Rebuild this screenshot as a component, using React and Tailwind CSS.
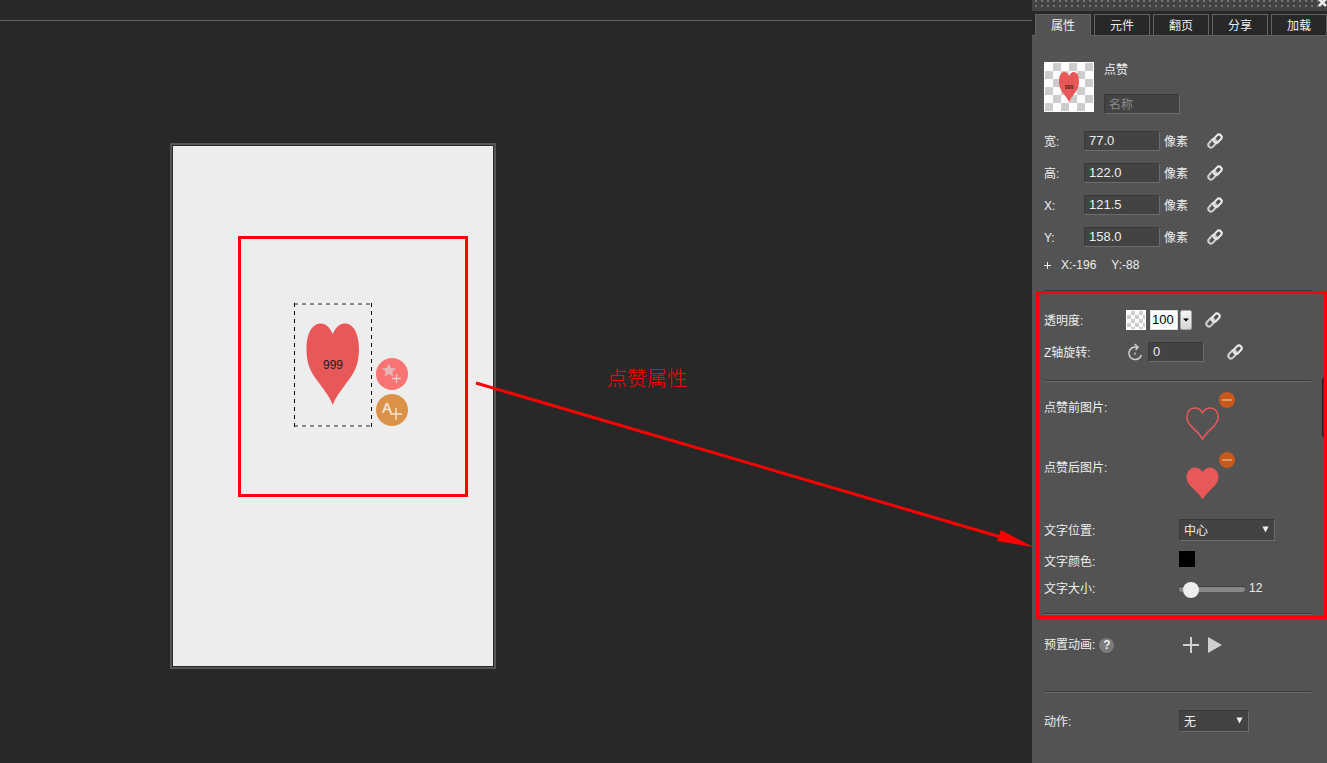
import React from "react";

const HEART =
  "M50 13 C44 4 36 0 27 0 C10 0 0 13 0 31 C0 55 14 64 25 74 C36 84 44 90 50 100 C56 90 64 84 75 74 C86 64 100 55 100 31 C100 13 90 0 73 0 C64 0 56 4 50 13Z";

const inset =
  "border border-t-[#393939] border-l-[#393939] border-r-[#6c6c6c] border-b-[#6c6c6c] bg-[#434343] text-[#eeeeee] outline-none";

function Chain({ label }) {
  return (
    <button type="button" aria-label={label} className="flex size-[14px] items-center justify-center">
      <svg viewBox="0 0 14 14" className="size-[14px] overflow-visible" fill="none" strokeWidth="2">
        <g transform="rotate(-47 7 7)">
          <rect x="-1.2" y="4" width="9.4" height="5.4" rx="2.7" stroke="#cfcfcf" />
          <rect x="5.8" y="4.6" width="9.4" height="5.4" rx="2.7" stroke="#ececec" />
        </g>
      </svg>
    </button>
  );
}

function Divider() {
  return <hr className="mr-4 h-[2px] border-0 border-t border-b border-t-[#3a3a3a] border-b-[#6b6b6b]" />;
}

function DimensionRow({ id, label, value }) {
  return (
    <div className="flex h-8 items-center">
      <label htmlFor={id} className="w-10 pt-[2px]">{label}</label>
      <input id={id} defaultValue={value} className={`h-5 w-[76px] px-1 pb-px text-[13px] ${inset}`} />
      <span className="ml-1 w-11 pt-[2px]">像素</span>
      <Chain label={`${label}关联`} />
    </div>
  );
}

function Dropdown({ id, options, className }) {
  return (
    <div className={`relative ${className}`}>
      <select id={id} className={`h-[22px] w-full appearance-none px-1 pt-[2px] text-[12px] ${inset}`}>
        {options.map((o) => (
          <option key={o}>{o}</option>
        ))}
      </select>
      <svg viewBox="0 0 8 8" className="pointer-events-none absolute top-[7px] right-[6px] size-[7px]" fill="#eeeeee">
        <path d="M0.5 0.5h7L4 7.5z" />
      </svg>
    </div>
  );
}

function HeartRow({ label, filled }) {
  return (
    <div className="flex h-[60px] items-start">
      <span className="w-[142px] pt-[18px] leading-4">{label}</span>
      <div className="relative pt-[25px]">
        <svg viewBox="-3 -3 106 106" preserveAspectRatio="none" className="h-[33px] w-[33px]">
          <path
            d="M50 15 C44 5 36 0 26 0 C10 0 0 13 0 29 C0 43 7 52 16 61 L36 81 C42 87 46 93 50 100 C54 93 58 87 64 81 L84 61 C93 52 100 43 100 29 C100 13 90 0 74 0 C64 0 56 5 50 15Z"
            fill={filled ? "#e95858" : "none"}
            stroke="#e95858"
            strokeWidth={filled ? 3 : 5}
          />
        </svg>
        <button
          type="button"
          aria-label={`删除${label}`}
          className="absolute top-[10px] left-[33px] flex size-4 items-center justify-center rounded-full bg-[#c8591d]"
        >
          <span className="h-[2px] w-[10px] bg-[#dc9668]" />
        </button>
      </div>
    </div>
  );
}

function Panel() {
  const tabs = ["属性", "元件", "翻页", "分享", "加载"];
  return (
    <aside className="flex w-[295px] shrink-0 flex-col bg-[#535353]">
      <div className="relative h-[11px] bg-[#434343]">
        <div className="mr-[8px] ml-[3px] h-[7px] bg-[linear-gradient(90deg,transparent_2px,#434343_2px),linear-gradient(#747474_2px,#434343_2px)] bg-[length:6px_5px]" />
        <button type="button" aria-label="关闭" className="absolute -top-[2px] right-0 size-[9px]">
          <svg viewBox="0 0 9 9" className="size-[9px]" stroke="#eeeeee" strokeWidth="2.6">
            <path d="M1 1l7 7M8 1l-7 7" />
          </svg>
        </button>
      </div>
      <div role="tablist" className="flex h-[25px] items-end gap-[3px] bg-[linear-gradient(#282828_24px,#636363_24px)] pl-[3px]">
        {tabs.map((t, i) => (
          <button
            key={t}
            type="button"
            role="tab"
            aria-selected={i === 0}
            className={`h-[22px] flex-1 border border-[#636363] pt-px text-center leading-5 ${
              i === 0 ? "border-b-[#535353] bg-[#535353]" : "bg-[#282828]"
            }`}
          >
            {t}
          </button>
        ))}
      </div>

      <div className="pt-[26px] pl-3">
        <div className="mr-4 flex">
          <div className="flex size-[50px] items-center justify-center border border-white bg-[conic-gradient(#cccccc_25%,#ffffff_0_50%,#cccccc_0_75%,#ffffff_0)] bg-[length:16px_16px]">
            <svg viewBox="0 0 20 30" className="h-[30px] w-5">
              <g transform="scale(0.2 0.3)">
                <path d={HEART} fill="#e95858" />
              </g>
              <text x="10" y="17" textAnchor="middle" fontSize="5" fill="#000">999</text>
            </svg>
          </div>
          <div className="ml-[10px] flex flex-col gap-4">
            <span className="leading-4">点赞</span>
            <input aria-label="名称" placeholder="名称" className={`h-5 w-[76px] px-1 pt-px text-[12px] placeholder:text-[#8c8c8c] ${inset}`} />
          </div>
        </div>

        <div className="mt-[11px]">
          <DimensionRow id="w" label="宽:" value="77.0" />
          <DimensionRow id="h" label="高:" value="122.0" />
          <DimensionRow id="x" label="X:" value="121.5" />
          <DimensionRow id="y" label="Y:" value="158.0" />
          <div className="mb-[13px] flex h-6 items-center">
            <svg viewBox="0 0 7 7" className="mr-[10px] size-[7px]" stroke="#eeeeee">
              <path d="M3.5 0v7M0 3.5h7" />
            </svg>
            <span className="mr-[15px]">X:-196</span>
            <span>Y:-88</span>
          </div>
        </div>

        <Divider />
        <div className="my-3">
          <div className="flex h-8 items-center">
            <label htmlFor="opacity" className="w-[82px] pt-[2px]">透明度:</label>
            <span className="size-5 border border-white bg-[conic-gradient(#cccccc_25%,#ffffff_0_50%,#cccccc_0_75%,#ffffff_0)] bg-[length:8px_8px]" />
            <input id="opacity" defaultValue="100" className="ml-1 h-5 w-7 border border-[#dddddd] bg-white px-px pb-px text-[13px] text-black outline-none" />
            <button
              type="button"
              aria-label="选择透明度"
              className="ml-[2px] flex h-5 w-3 items-center justify-center rounded-[2px] border border-[#a5a5a5] bg-[linear-gradient(#f6f6f6,#d4d4d4)]"
            >
              <svg viewBox="0 0 6 4" className="h-1 w-[6px]"><path d="M0 0.5h6L3 3.5z" fill="#000" /></svg>
            </button>
            <div className="ml-[14px]"><Chain label="透明度关联" /></div>
          </div>
          <div className="flex h-8 items-center">
            <label htmlFor="rot" className="w-[83px] pt-[2px]">Z轴旋转:</label>
            <svg viewBox="0 0 16 18" className="h-[18px] w-4" fill="none" stroke="#d0d0d0" strokeWidth="1.5">
              <path d="M14.3 12A6.3 6.3 0 1 1 10 4.2" />
              <path d="M7.6 1l3.4 3-2.4 3" />
              <rect x="7" y="9.6" width="2" height="2" fill="#a8a8a8" stroke="none" />
            </svg>
            <input id="rot" defaultValue="0" className={`ml-[5px] h-5 w-14 px-1 pb-px text-[13px] ${inset}`} />
            <div className="ml-6"><Chain label="旋转关联" /></div>
          </div>
        </div>

        <Divider />
        <HeartRow label="点赞前图片:" />
        <HeartRow label="点赞后图片:" filled />

        <div className="mt-3 mb-[13px]">
          <div className="flex h-8 items-center">
            <label htmlFor="pos" className="w-[135px] pt-[2px]">文字位置:</label>
            <Dropdown id="pos" options={["中心", "上方", "下方"]} className="w-24" />
          </div>
          <div className="flex h-[30px] items-center">
            <label htmlFor="color" className="w-[135px] pt-[2px]">文字颜色:</label>
            <input
              id="color"
              type="color"
              defaultValue="#000000"
              className="mb-1 size-4 appearance-none border-0 bg-black p-0 [&::-webkit-color-swatch-wrapper]:p-0 [&::-webkit-color-swatch]:border-0"
            />
          </div>
          <div className="flex h-6 items-center">
            <label htmlFor="size" className="w-[135px] pt-[2px]">文字大小:</label>
            <input
              id="size"
              type="range"
              min="8"
              max="60"
              defaultValue="12"
              className="mt-[2px] h-4 w-[66px] appearance-none bg-transparent [&::-webkit-slider-runnable-track]:h-[6px] [&::-webkit-slider-runnable-track]:rounded-[3px] [&::-webkit-slider-runnable-track]:border-t [&::-webkit-slider-runnable-track]:border-[#3d3d3d] [&::-webkit-slider-runnable-track]:bg-[#888888] [&::-webkit-slider-thumb]:-mt-[5px] [&::-webkit-slider-thumb]:size-4 [&::-webkit-slider-thumb]:appearance-none [&::-webkit-slider-thumb]:rounded-full [&::-webkit-slider-thumb]:bg-[#eeeeee]"
            />
            <output htmlFor="size" className="ml-1">12</output>
          </div>
        </div>

        <Divider />
        <div className="mt-[14px] mb-[30px] flex h-8 items-center">
          <div className="flex w-[138px] items-center gap-1">
            <span>预置动画:</span>
            <button type="button" aria-label="帮助" className="flex size-[15px] items-center justify-center rounded-full bg-[#7b7b7b] text-[12px] font-bold">?</button>
          </div>
          <button type="button" aria-label="添加动画" className="size-[18px]">
            <svg viewBox="0 0 18 18" className="size-[18px]" stroke="#d0d0d0" strokeWidth="2"><path d="M9 1v16M1 9h16" /></svg>
          </button>
          <button type="button" aria-label="播放" className="ml-2 h-4 w-[14px]">
            <svg viewBox="0 0 14 16" className="h-4 w-[14px]" fill="#d0d0d0"><path d="M0 0l14 8L0 16z" /></svg>
          </button>
        </div>

        <Divider />
        <div className="mt-3 flex h-8 items-center">
          <label htmlFor="act" className="w-[135px] pt-[2px]">动作:</label>
          <Dropdown id="act" options={["无", "跳转"]} className="w-[70px]" />
        </div>
      </div>
    </aside>
  );
}

function Stage() {
  return (
    <main className="min-w-0 flex-1 bg-[#282828]">
      <div className="h-[21px] border-b border-[#606060]" />
      <div className="pt-[122px] pl-[170px]">
        <div className="relative h-[526px] w-[326px] border-2 border-[#555555] bg-[#ededed] shadow-[inset_0_0_0_1px_#282828]">
          <div className="absolute top-[158px] left-[122px] flex h-[124px] w-[78px] items-center justify-center">
            <svg viewBox="0 0 78 124" className="absolute inset-0 h-[124px] w-[78px]" fill="none">
              <rect x="0.5" y="0.5" width="77" height="123" stroke="#ffffff" />
              <path d="M0 1h78M0 123h78" stroke="#666666" strokeWidth="1.6" strokeDasharray="4 4" />
              <path d="M0.5 0v124M77.5 0v124" stroke="#000000" strokeDasharray="4 4" />
              <g transform="translate(12.5 20.5) scale(0.525 0.815)">
                <path d={HEART} fill="#e95858" />
              </g>
            </svg>
            <span className="relative text-[#222222]">999</span>
          </div>
          <div className="absolute top-[213px] left-[204px] flex flex-col gap-1">
            <button type="button" aria-label="添加图标" className="size-8">
              <svg viewBox="0 0 32 32" className="size-8">
                <circle cx="16" cy="16" r="16" fill="#fa7474" />
                <path d="M13 5.5l2 4.4 4.9.5-3.6 3.2 1 4.9L13 16l-4.3 2.5 1-4.9-3.6-3.2 4.9-.5z" fill="#e4b8b8" />
                <path d="M20.5 16v9M16 20.5h9" stroke="#e8cccc" strokeWidth="1.3" />
              </svg>
            </button>
            <button type="button" aria-label="添加文字" className="relative size-8 rounded-full bg-[#dc9148] text-[#f7e3cf]">
              <span className="absolute top-[5px] left-[6px] font-['Open_Sans',sans-serif] text-[15px] leading-4 font-semibold">A</span>
              <svg viewBox="0 0 12 12" className="absolute top-[14px] left-[14px] size-3" stroke="#f7e3cf" strokeWidth="1.4"><path d="M6 0v12M0 6h12" /></svg>
            </button>
          </div>
        </div>
      </div>
    </main>
  );
}

export default function App() {
  return (
    <div className="relative flex min-h-screen overflow-hidden bg-[#282828] font-['Liberation_Sans','Noto_Sans_CJK_SC',sans-serif] text-[12px] text-[#eeeeee]">
      <Stage />
      <Panel />
      <div className="pointer-events-none absolute top-[378px] right-0 h-[59px] w-[5px] rounded-l-[3px] border border-r-0 border-[#1c1f26] bg-[#3c3c3c]" />
      <div className="pointer-events-none absolute top-[236px] left-[238px] h-[261px] w-[230px] border-3 border-[#ff0000]" />
      <div className="pointer-events-none absolute top-[291px] right-0 h-[328px] w-[291px] border-3 border-[#ff0000]" />
      <svg viewBox="0 0 560 170" className="pointer-events-none absolute top-[380px] left-[474px] h-[170px] w-[560px]">
        <path d="M2 3L530 158" stroke="#ff0000" strokeWidth="3" />
        <path d="M527 150L559 167L523 161Z" fill="#ff0000" />
      </svg>
      <p className="pointer-events-none absolute top-[367px] left-[607px] font-['Liberation_Serif','Noto_Sans_CJK_SC',serif] text-[20px] leading-6 font-light text-[#ff0000]">点赞属性</p>
    </div>
  );
}
